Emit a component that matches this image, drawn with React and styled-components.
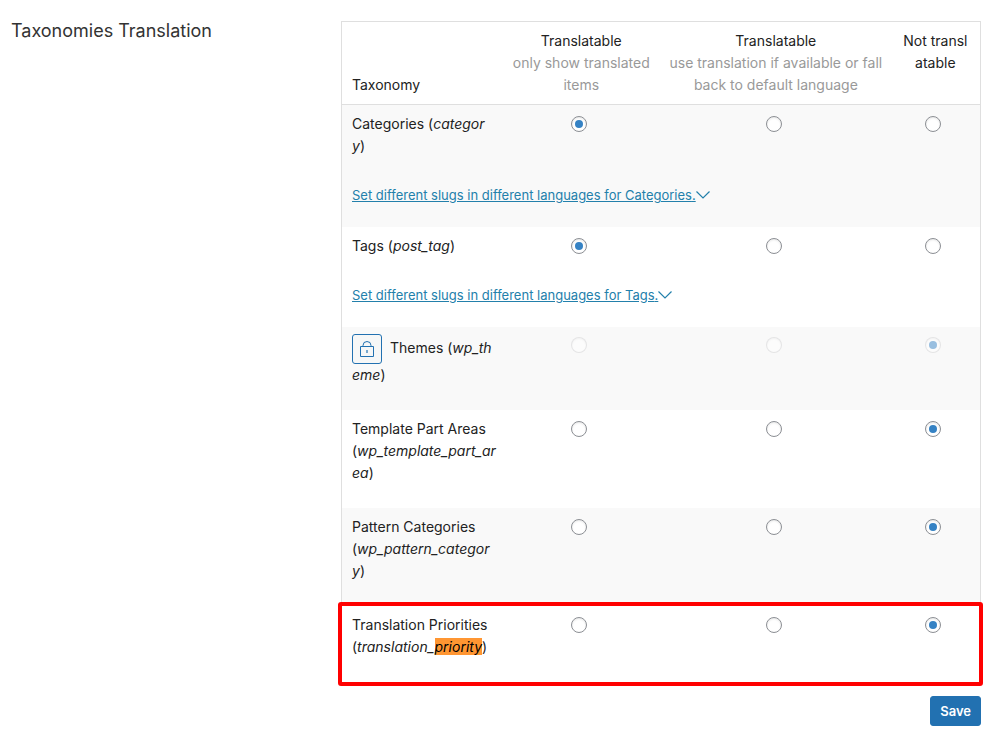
import React, { Fragment } from 'react';
import styled, { createGlobalStyle } from 'styled-components';

const GlobalStyle = createGlobalStyle`
  * {
    box-sizing: border-box;
  }
  body {
    margin: 0;
    background: #fff;
    color: #222;
    font-family: Inter, Roboto, sans-serif;
    font-size: 14px;
    line-height: 22px;
  }
`;

const Section = styled.section`
  display: grid;
  grid-template-columns: 330px 1fr;
  align-items: start;
  padding: 21px 20px 14px 11px;
`;

const Title = styled.h3`
  margin: 0;
  color: #333;
  font-size: 18px;
  font-weight: 400;
  line-height: 20px;
`;

const Form = styled.form`
  display: flex;
  flex-direction: column;
  gap: 13px;
`;

const Table = styled.table`
  width: 100%;
  table-layout: fixed;
  border: 1px solid #dfdfdf;
  border-collapse: separate;
  border-spacing: 0;
`;

const Head = styled.th`
  width: ${props => props.$width};
  padding: 8px ${props => (props.$tight ? 4 : 10)}px;
  border-bottom: 1px solid #dfdfdf;
  font-weight: 400;
  text-align: ${props => props.$align || 'center'};
  vertical-align: ${props => props.$valign || 'top'};
  word-break: ${props => (props.$breakAll ? 'break-all' : 'normal')};
`;

const Hint = styled.span`
  display: block;
  color: #999;
`;

const Group = styled.tbody`
  &:nth-of-type(odd) {
    background: #f9f9f9;
  }
`;

const Row = styled.tr`
  position: relative;
  ${props => props.$marked && `
    &::after {
      content: '';
      position: absolute;
      inset: -4px -3px -4px -4px;
      border: 4px solid #f00;
      border-radius: 3px;
      pointer-events: none;
    }
  `}
`;

const Name = styled.th`
  padding: ${props => (props.$locked ? 7 : 8)}px 4px ${props => (props.$slugs ? 8 : 24)}px 10px;
  font-weight: 400;
  text-align: left;
  vertical-align: top;
`;

const Cell = styled.td`
  padding: ${props => (props.$locked ? 7 : 8)}px 10px;
  vertical-align: top;
`;

const Choice = styled.label`
  display: flex;
  align-items: center;
  justify-content: center;
  height: 22px;
`;

const Radio = styled.input`
  display: grid;
  place-items: center;
  width: 16px;
  height: 16px;
  margin: 0 4px 0 0;
  appearance: none;
  background: #fff;
  border: 1px solid #8c8f94;
  border-radius: 50%;
  box-shadow: inset 0 1px 2px rgba(0, 0, 0, 0.1);
  &:checked::before {
    content: '';
    width: 8px;
    height: 8px;
    border-radius: 50%;
    background: #3582c4;
  }
  &:disabled {
    background: rgba(255, 255, 255, 0.5);
    border-color: rgba(220, 220, 222, 0.75);
    box-shadow: inset 0 1px 2px rgba(0, 0, 0, 0.04);
  }
  &:disabled::before {
    opacity: 0.5;
  }
`;

const Mark = styled.mark`
  background: #ff9632;
  color: #000;
`;

const SlugCell = styled.td`
  height: 62px;
  padding: 0 10px 2px;
`;

const SlugLink = styled.a`
  display: inline-flex;
  align-items: center;
  color: #2380ab;
  font-size: 13px;
  text-decoration: none;
  span {
    text-decoration: underline;
  }
`;

const LockButton = styled.button`
  display: inline-flex;
  align-items: center;
  justify-content: center;
  width: 30px;
  height: 30px;
  margin: 0 8px 0 0;
  padding: 0;
  vertical-align: middle;
  background: #f6f7f7;
  border: 1px solid #2271b1;
  border-radius: 3px;
  color: #2271b1;
`;

const Save = styled.button`
  align-self: flex-end;
  height: 30px;
  padding: 0 9px;
  background: #2271b1;
  border: 1px solid #2271b1;
  border-radius: 3px;
  color: #fff;
  font-family: inherit;
  font-size: 13px;
  font-weight: 600;
`;

const Chevron = () => (
  <svg width="14" height="8" viewBox="0 0 14 8" fill="none" stroke="currentColor" strokeWidth="1.2" aria-hidden="true">
    <path d="M0.5 0.5 L7 7 L13.5 0.5" />
  </svg>
);

const Lock = () => (
  <svg width="14" height="16" viewBox="0 0 14 16" fill="none" stroke="currentColor" aria-hidden="true">
    <path d="M0.5 5.5h13v10h-13z" />
    <path d="M3 5.5V4.5a4 4 0 0 1 8 0v1" />
    <path d="M7 9v3" strokeWidth="2" opacity="0.6" />
  </svg>
);

const modes = ['Translatable', 'Translatable with fallback', 'Not translatable'];

// the slug is kept in parts, a long one may wrap between them
const taxonomies = [
  { label: 'Categories', slug: ['categor', 'y'], mode: 0, slugs: true },
  { label: 'Tags', slug: ['post_tag'], mode: 0, slugs: true },
  { label: 'Themes', slug: ['wp_th', 'eme'], mode: 2, locked: true },
  { label: 'Template Part Areas', slug: ['wp_template_part_ar', 'ea'], mode: 2 },
  { label: 'Pattern Categories', slug: ['wp_pattern_categor', 'y'], mode: 2 },
  { label: 'Translation Priorities', slug: ['translation_'], mode: 2, match: 'priority' },
];

const Slug = ({ parts, match }) => (
  <em>
    {parts.map((part, i) => (
      <Fragment key={part}>{i > 0 && <wbr />}{part}</Fragment>
    ))}
    {match && <Mark>{match}</Mark>}
  </em>
);

const Taxonomy = ({ item }) => (
  <Group>
    <Row $marked={Boolean(item.match)}>
      <Name scope="row" $locked={item.locked} $slugs={item.slugs}>
        {item.locked && <LockButton type="button" aria-label="Unlock Themes"><Lock /></LockButton>}
        {item.label} (<Slug parts={item.slug} match={item.match} />)
      </Name>
      {modes.map((mode, i) => (
        <Cell key={mode} $locked={item.locked}>
          <Choice>
            <Radio
              type="radio"
              name={item.label}
              aria-label={`${item.label}: ${mode}`}
              defaultChecked={item.mode === i}
              disabled={item.locked}
            />
          </Choice>
        </Cell>
      ))}
    </Row>
    {item.slugs && (
      <tr>
        <SlugCell colSpan={4}>
          <SlugLink href="#">
            <span>Set different slugs in different languages for {item.label}.</span>
            <Chevron />
          </SlugLink>
        </SlugCell>
      </tr>
    )}
  </Group>
);

export default function App() {
  return (
    <Section>
      <GlobalStyle />
      <Title>Taxonomies Translation</Title>
      <Form>
        <Table>
          <thead>
            <tr>
              <Head $width="25%" $align="left" $valign="bottom">Taxonomy</Head>
              <Head $width="25%" $tight>Translatable<Hint>only show translated items</Hint></Head>
              <Head $width="36%" $tight>
                Translatable
                <Hint>use translation if available or fall back to default language</Hint>
              </Head>
              <Head $width="14%" $breakAll>Not translatable</Head>
            </tr>
          </thead>
          {taxonomies.map(item => <Taxonomy key={item.label} item={item} />)}
        </Table>
        <Save type="button">Save</Save>
      </Form>
    </Section>
  );
}
